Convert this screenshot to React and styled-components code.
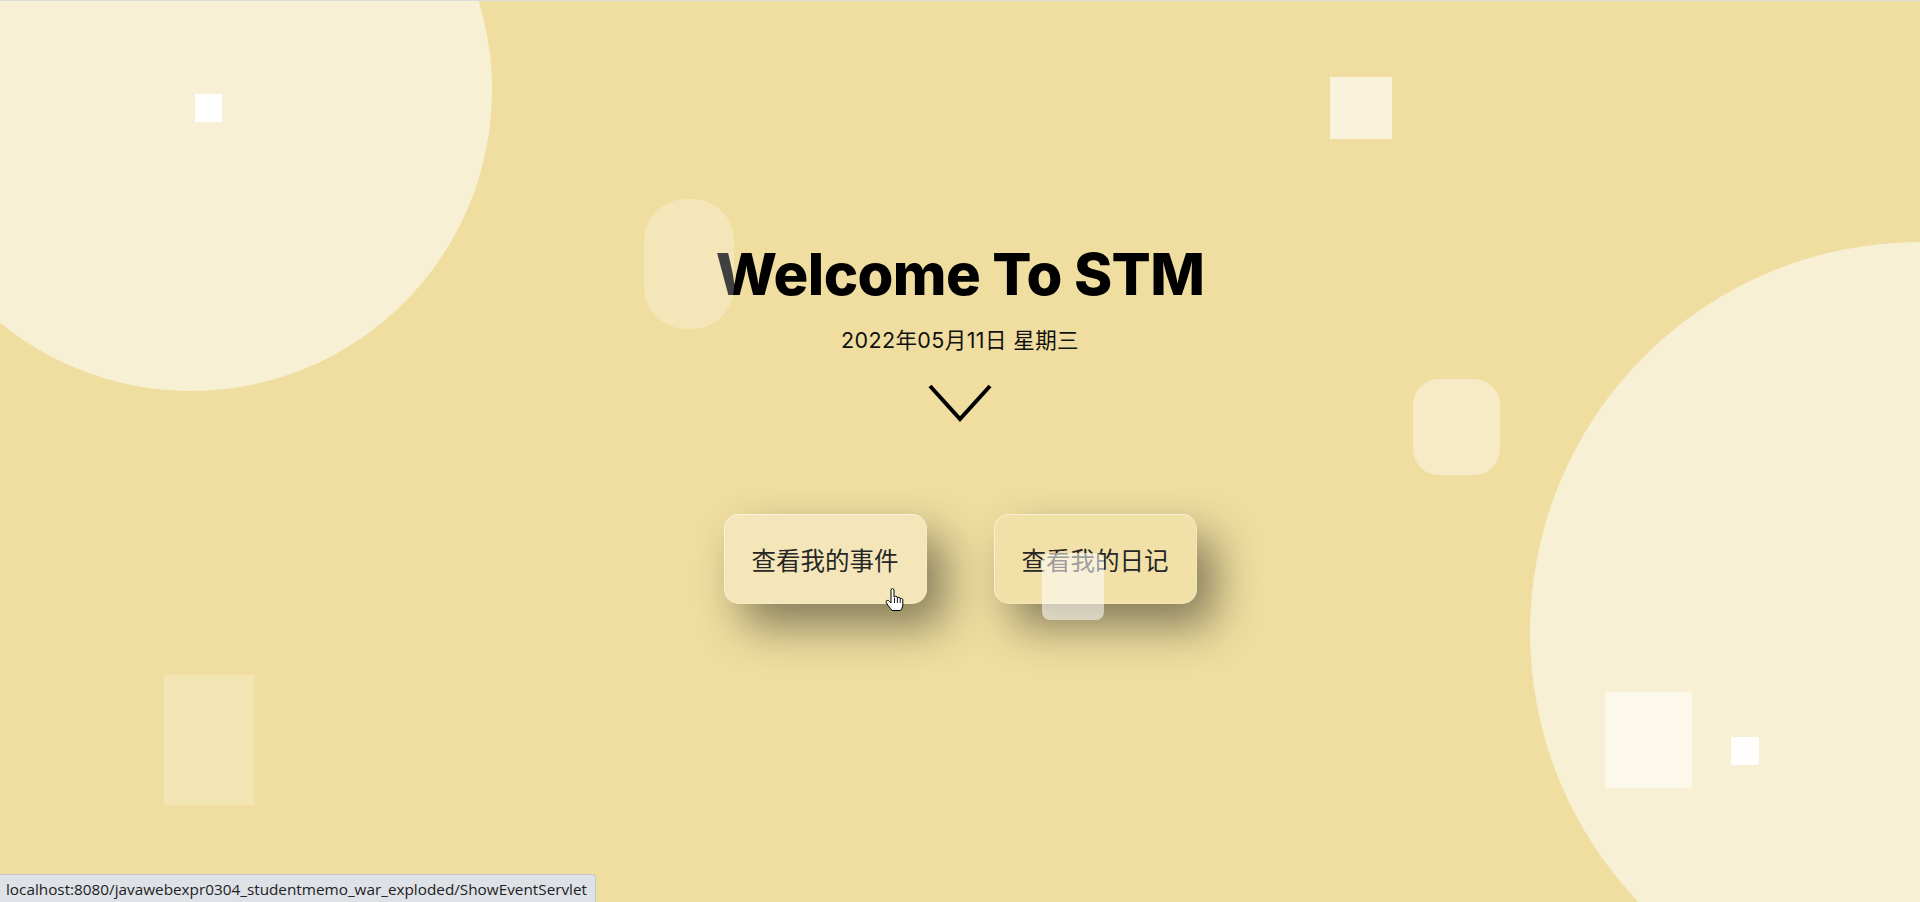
import React from "react";
import styled, { createGlobalStyle } from "styled-components";

const GlobalStyle = createGlobalStyle`
  html, body {
    margin: 0;
    padding: 0;
    overflow: hidden;
  }
  * {
    box-sizing: border-box;
  }
`;

const Page = styled.main`
  position: relative;
  width: 100vw;
  height: 100vh;
  background-color: #f0dea0;
  border-top: 1px solid #dcdde0;
  overflow: hidden;
  font-family: "Inter", "Noto Sans CJK SC", sans-serif;
`;

const Hero = styled.section`
  display: flex;
  flex-direction: column;
  align-items: center;
  padding-top: 238px;
`;

const Title = styled.h1`
  margin: 0;
  font-size: 58px;
  line-height: 70px;
  font-weight: 800;
  color: #000;
  letter-spacing: -0.6px;
`;

const DateLine = styled.p`
  margin: 17px 0 0;
  font-size: 21.5px;
  line-height: 28px;
  font-weight: 400;
  letter-spacing: 0.4px;
  color: #111;
`;

const Chevron = styled.svg`
  display: block;
  margin-top: 29px;
  width: 66px;
  height: 40px;
`;

const ButtonRow = styled.div`
  display: flex;
  gap: 67px;
  margin-top: 91px;
`;

const GlassButton = styled.button`
  width: 203px;
  height: 90px;
  padding: 0;
  border-radius: 15px;
  border: 1px solid rgba(255, 255, 255, 0.5);
  border-right-color: rgba(255, 255, 255, 0.2);
  border-bottom-color: rgba(255, 255, 255, 0.2);
  background: ${(p) =>
    p.$active ? "rgba(255, 255, 255, 0.25)" : "rgba(255, 255, 255, 0.08)"};
  box-shadow: 18px 22px 45px rgba(0, 0, 0, 0.45);
  font-family: "Noto Sans CJK SC", sans-serif;
  font-size: 24.5px;
  font-weight: 400;
  color: #262626;
  cursor: pointer;
`;

const Shape = styled.span`
  position: absolute;
  left: ${(p) => p.$x}px;
  top: ${(p) => p.$y}px;
  width: ${(p) => p.$w}px;
  height: ${(p) => p.$h}px;
  border-radius: ${(p) => p.$r || 0};
  background: rgba(255, 255, 255, ${(p) => p.$a});
  pointer-events: none;
`;

const Cursor = styled.svg`
  position: absolute;
  left: 885px;
  top: 586px;
  width: 19px;
  height: 25px;
  pointer-events: none;
`;

const StatusBar = styled.div`
  position: absolute;
  left: 0;
  bottom: 0;
  height: 28px;
  padding: 0 8px 0 6px;
  display: flex;
  align-items: center;
  background: #dee1e6;
  border-top: 1px solid #c3c7cd;
  border-right: 1px solid #c3c7cd;
  border-top-right-radius: 4px;
  font-family: "Open Sans", "Noto Sans", sans-serif;
  font-size: 15.3px;
  color: #202124;
  white-space: nowrap;
`;

const shapes = [
  { x: -110, y: -212, w: 602, h: 602, r: "50%", a: 0.55 },
  { x: 1530, y: 241, w: 780, h: 780, r: "50%", a: 0.55 },
  { x: 195, y: 93, w: 27, h: 28, a: 0.95 },
  { x: 1330, y: 76, w: 62, h: 62, a: 0.63 },
  { x: 644, y: 198, w: 90, h: 130, r: "42px", a: 0.25 },
  { x: 1249, y: 296, w: 69, h: 165, a: 0.035 },
  { x: 1413, y: 378, w: 87, h: 96, r: "26px", a: 0.4 },
  { x: 1042, y: 552, w: 62, h: 67, r: "8px", a: 0.55 },
  { x: 164, y: 674, w: 90, h: 130, a: 0.2 },
  { x: 1605, y: 691, w: 87, h: 96, a: 0.5 },
  { x: 1731, y: 736, w: 28, h: 28, r: "2px", a: 0.92 },
];

export default function App() {
  return (
    <>
      <GlobalStyle />
      <Page>
        <Hero>
          <Title>Welcome To STM</Title>
          <DateLine>2022年05月11日 星期三</DateLine>
          <Chevron viewBox="0 0 66 40">
            <polyline
              points="3,3 33,36 63,3"
              fill="none"
              stroke="#000"
              strokeWidth="4"
            />
          </Chevron>
          <ButtonRow>
            <GlassButton $active>查看我的事件</GlassButton>
            <GlassButton>查看我的日记</GlassButton>
          </ButtonRow>
        </Hero>

        {shapes.map((s, i) => (
          <Shape key={i} $x={s.x} $y={s.y} $w={s.w} $h={s.h} $r={s.r} $a={s.a} />
        ))}

        <Cursor viewBox="0 0 19 25">
          <path
            d="M6 2.5 Q7.5 0.8 9 2.5 V10 Q10.8 8.6 12.3 10 V10.8 Q14 9.6 15.2 11 V11.8 Q16.8 10.8 17.8 12.3 V18.5 Q17.2 21.5 15.6 23.5 H7.2 Q5.6 21.6 3.2 18.6 L1.2 15.6 Q0.6 13.8 2.2 13.4 Q3.4 13.2 4.6 14.6 L6 16 Z"
            fill="#fff"
            stroke="#000"
            strokeWidth="1"
            strokeLinejoin="round"
          />
          <path d="M9.5 11 V16 M12.4 11 V16 M15.2 12 V16" stroke="#000" strokeWidth="0.9" />
        </Cursor>

        <StatusBar>localhost:8080/javawebexpr0304_studentmemo_war_exploded/ShowEventServlet</StatusBar>
      </Page>
    </>
  );
}
